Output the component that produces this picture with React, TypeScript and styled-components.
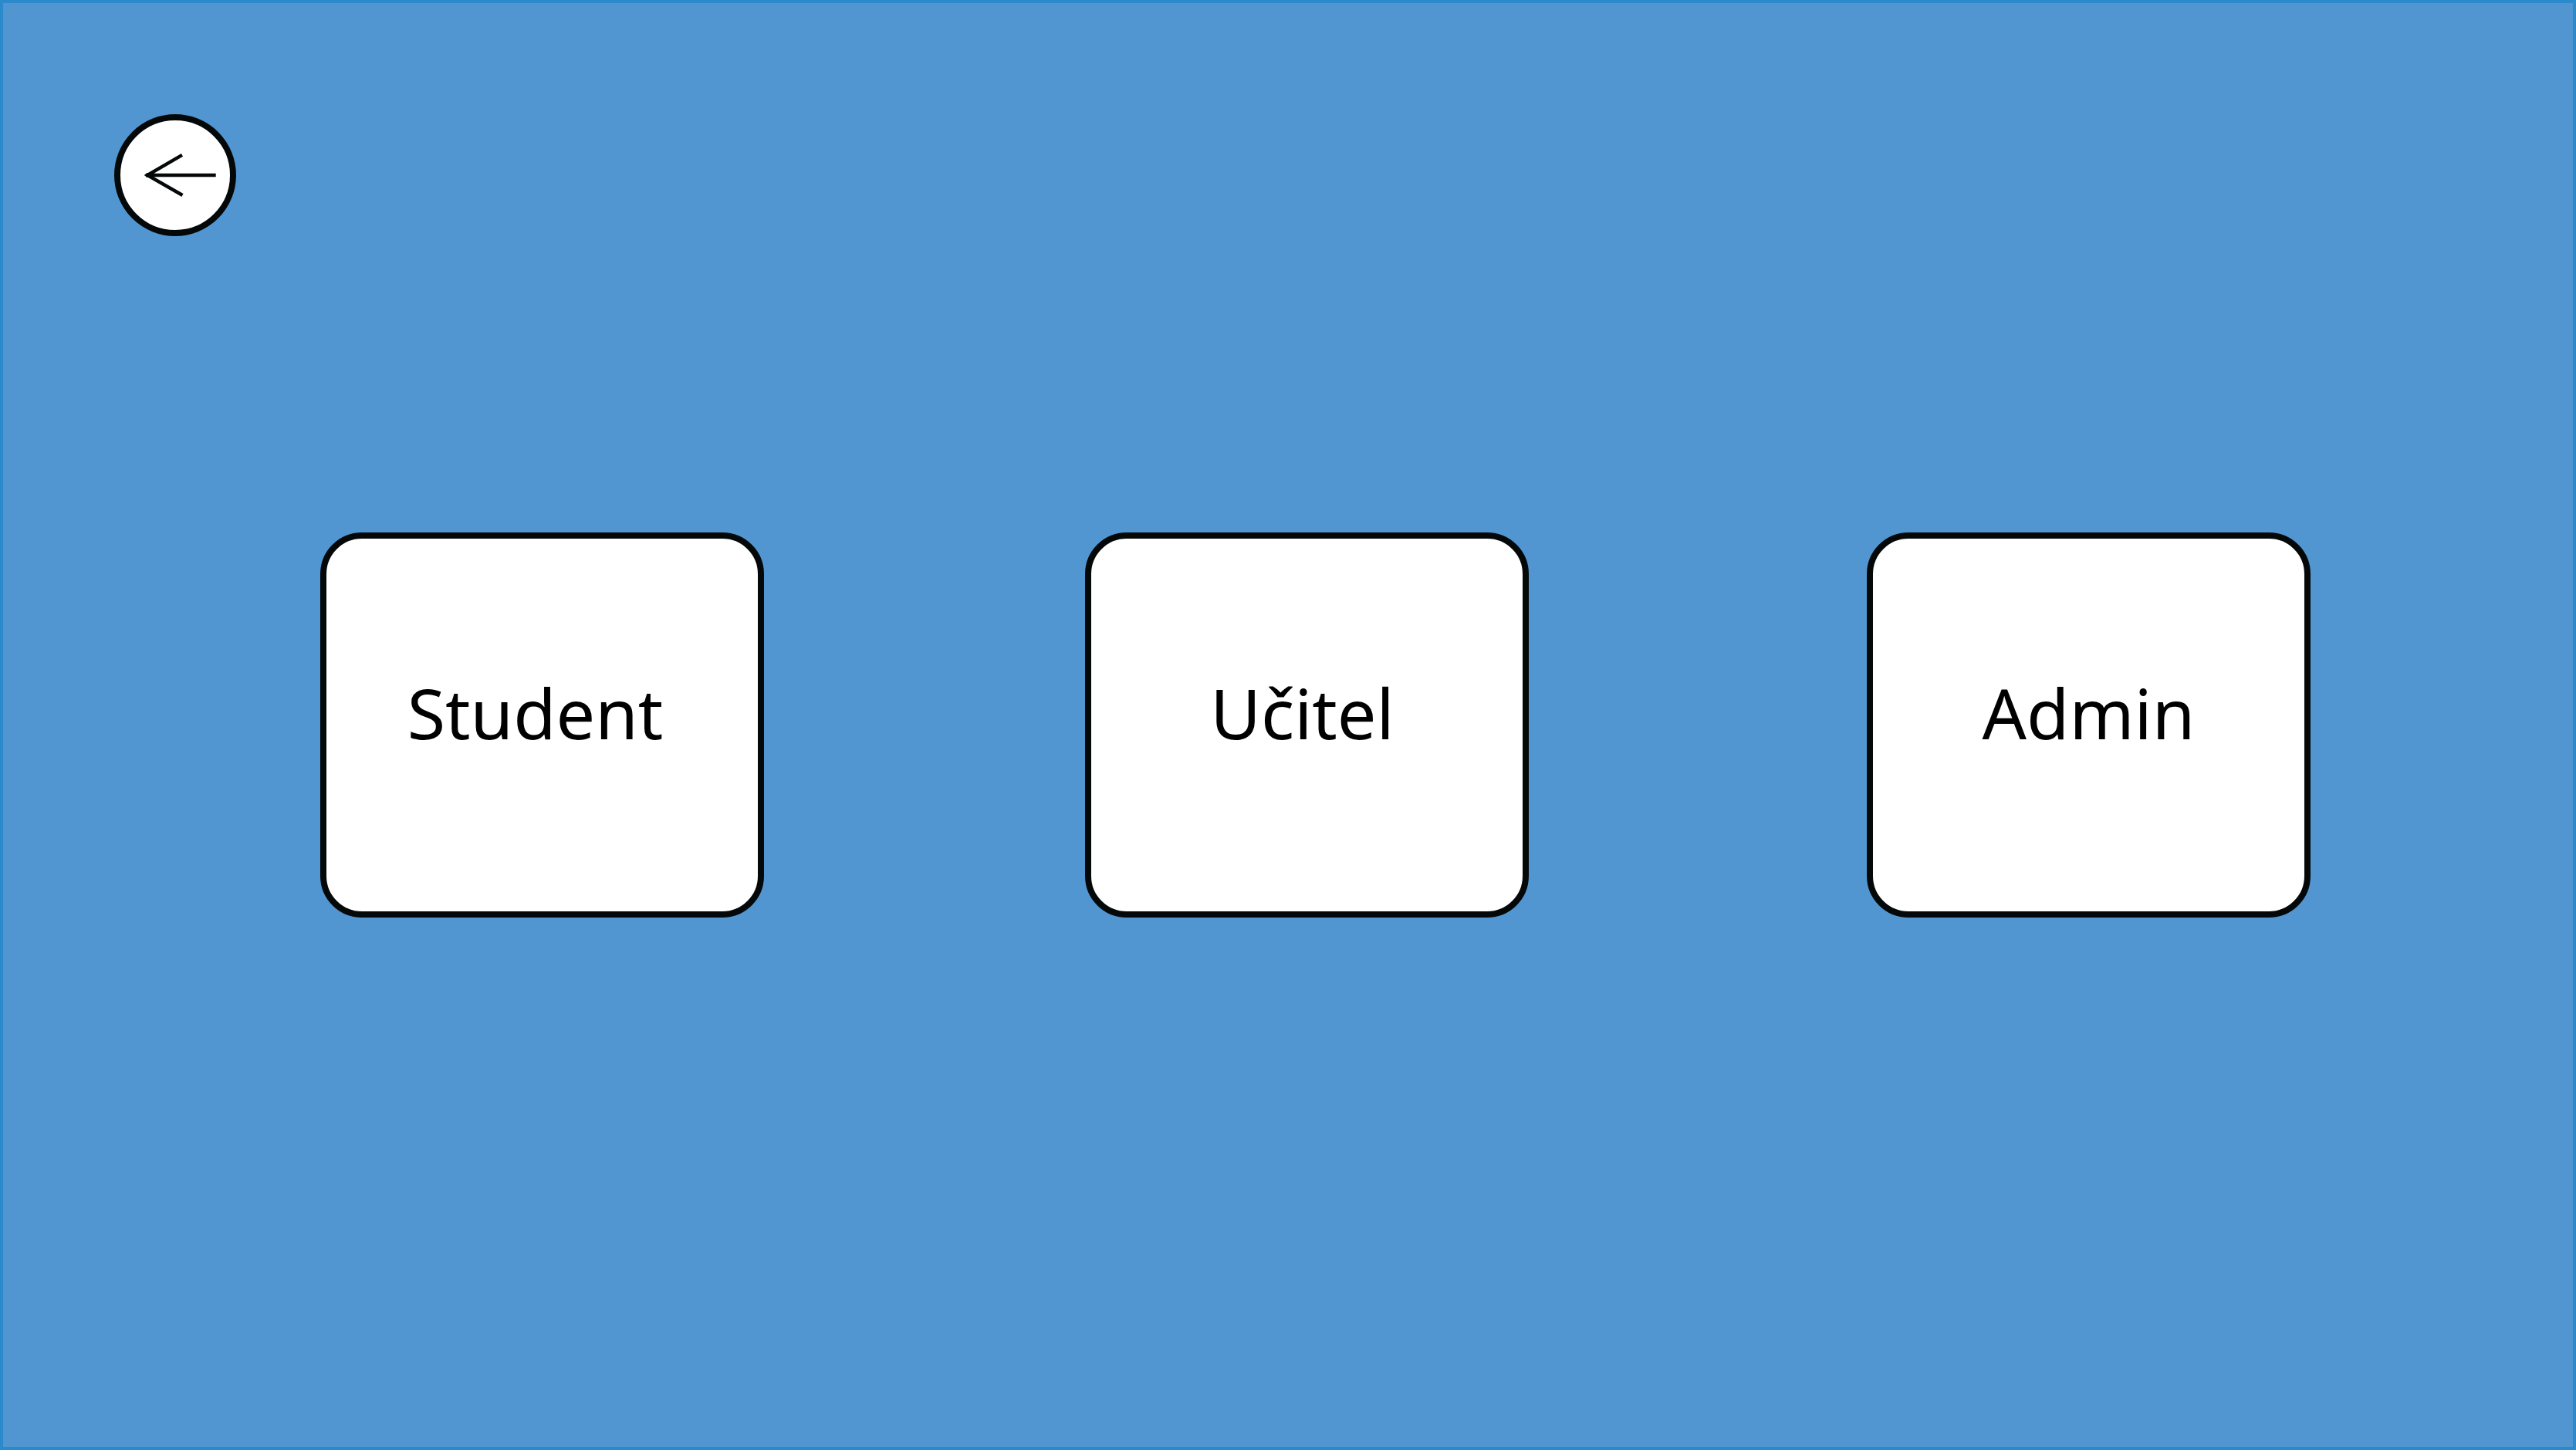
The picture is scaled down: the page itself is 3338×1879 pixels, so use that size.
import React from "react";
import styled, { createGlobalStyle } from "styled-components";

const Global = createGlobalStyle`
  *, *::before, *::after { box-sizing: border-box; }
  body { margin: 0; background: #5196d0; }
`;

const Page = styled.div`
  min-height: 100vh;
  display: flex;
  flex-direction: column;
  border: 4px solid #2a8acb;
  background: #5196d0;
  font-family: "Noto Sans", "Open Sans", sans-serif;
`;

const TopBar = styled.header`
  display: flex;
  padding: 144px 144px 0;
`;

const BackButton = styled.button`
  display: grid;
  place-items: center;
  width: 158px;
  height: 158px;
  padding: 0;
  border: 8px solid #050808;
  border-radius: 50%;
  background: #fff;
  cursor: pointer;
`;

const ArrowIcon = styled.svg`
  width: 142px;
  height: 142px;
  fill: none;
  stroke: #050808;
  stroke-width: 4.4;
`;

const Roles = styled.main`
  display: grid;
  grid-template-columns: 991fr 1013fr 575px;
  padding: 384px 340px 0 411px;
`;

const RoleCard = styled.button<{ $inset: number }>`
  display: flex;
  align-items: center;
  justify-content: center;
  width: 575px;
  height: 499px;
  padding: 0 ${(p) => p.$inset}px 34px 0;
  border: 8px solid #050808;
  border-radius: 54px;
  background: #fff;
  color: #000;
  font-family: inherit;
  font-size: 90px;
  line-height: 120px;
  cursor: pointer;
`;

const roles = [
  { name: "Student", inset: 18 },
  { name: "Učitel", inset: 12 },
  { name: "Admin", inset: 0 },
];

export default function App() {
  return (
    <>
      <Global />
      <Page>
        <TopBar>
          <BackButton type="button" aria-label="Zpět">
            <ArrowIcon viewBox="8 8 142 142" aria-hidden="true">
              <path d="M43 79H131.700M88 52.800L43 79L88.500 105" />
              <circle cx="43.500" cy="79" r="3" fill="#050808" stroke="none" />
            </ArrowIcon>
          </BackButton>
        </TopBar>
        <Roles>
          {roles.map((role) => (
            <RoleCard key={role.name} type="button" $inset={role.inset}>
              {role.name}
            </RoleCard>
          ))}
        </Roles>
      </Page>
    </>
  );
}
